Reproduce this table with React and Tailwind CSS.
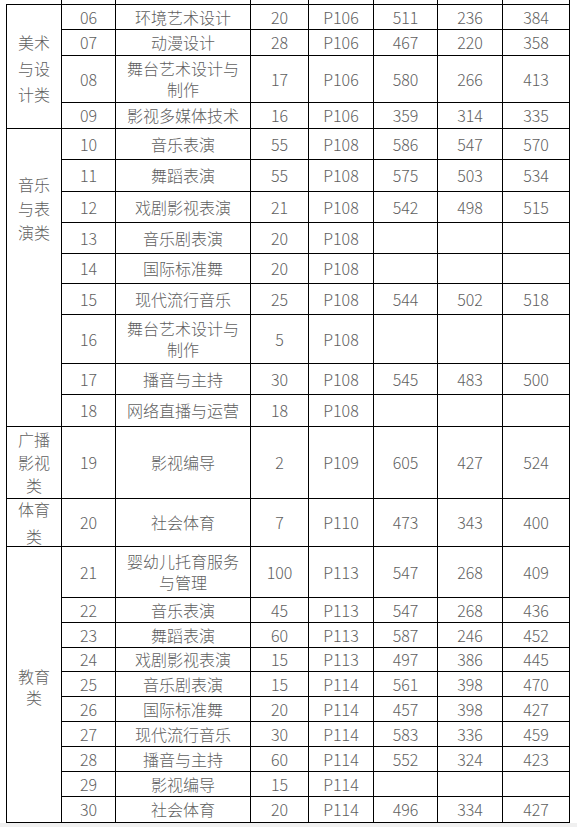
const ROWS = [
  ["06", "环境艺术设计", "20", "P106", "511", "236", "384", 25],
  ["07", "动漫设计", "28", "P106", "467", "220", "358", 26],
  ["08", ["舞台艺术设计与", "制作"], "17", "P106", "580", "266", "413", 47],
  ["09", "影视多媒体技术", "16", "P106", "359", "314", "335", 26],
  ["10", "音乐表演", "55", "P108", "586", "547", "570", 31],
  ["11", "舞蹈表演", "55", "P108", "575", "503", "534", 32],
  ["12", "戏剧影视表演", "21", "P108", "542", "498", "515", 31],
  ["13", "音乐剧表演", "20", "P108", "", "", "", 31],
  ["14", "国际标准舞", "20", "P108", "", "", "", 30],
  ["15", "现代流行音乐", "25", "P108", "544", "502", "518", 31],
  ["16", ["舞台艺术设计与", "制作"], "5", "P108", "", "", "", 49],
  ["17", "播音与主持", "30", "P108", "545", "483", "500", 31],
  ["18", "网络直播与运营", "18", "P108", "", "", "", 32],
  ["19", "影视编导", "2", "P109", "605", "427", "524", 72],
  ["20", "社会体育", "7", "P110", "473", "343", "400", 48],
  ["21", ["婴幼儿托育服务", "与管理"], "100", "P113", "547", "268", "409", 51],
  ["22", "音乐表演", "45", "P113", "547", "268", "436", 25],
  ["23", "舞蹈表演", "60", "P113", "587", "246", "452", 25],
  ["24", "戏剧影视表演", "15", "P113", "497", "386", "445", 24],
  ["25", "音乐剧表演", "15", "P114", "561", "398", "470", 25],
  ["26", "国际标准舞", "20", "P114", "457", "398", "427", 25],
  ["27", "现代流行音乐", "30", "P114", "583", "336", "459", 25],
  ["28", "播音与主持", "60", "P114", "552", "324", "423", 25],
  ["29", "影视编导", "15", "P114", "", "", "", 25],
  ["30", "社会体育", "20", "P114", "496", "334", "427", 26],
];

// category cell starts on the row with this code
const GROUPS = {
  "06": { lines: ["美术", "与设", "计类"], span: 4, cls: "align-middle leading-[26px] pt-[4px]" },
  "10": { lines: ["音乐", "与表", "演类"], span: 9, cls: "align-top leading-[24px] pt-[43px]" },
  "19": { lines: ["广播", "影视", "类"], span: 1, cls: "align-middle leading-[23px]" },
  "20": { lines: ["体育", "类"], span: 1, cls: "align-middle leading-[20px] [&>div+div]:mt-[7px]" },
  "21": { lines: ["教育", "类"], span: 10, cls: "align-middle leading-[21px] pt-[6px]" },
};

const cell = "border border-black p-0 text-center align-middle";

function Lines({ value }) {
  if (!Array.isArray(value)) return value;
  return value.map((l, i) => (
    <div key={i} className="leading-[21px]">{l}</div>
  ));
}

export default function App() {
  return (
    <div
      className="w-[577px] h-[827px] bg-white overflow-hidden relative text-[#606060] text-[16px] font-light"
      style={{ fontFamily: '"Noto Sans CJK SC", "Noto Sans", sans-serif' }}
    >
      <div className="pl-[6px]">
        <table className="table-fixed border-collapse w-[563px]">
          <colgroup>
            <col className="w-[55px]" />
            <col className="w-[54px]" />
            <col className="w-[135px]" />
            <col className="w-[58px]" />
            <col className="w-[65px]" />
            <col className="w-[64px]" />
            <col className="w-[65px]" />
            <col className="w-[67px]" />
          </colgroup>
          <tbody>
            <tr className="h-[4px]">
              <td className="border-r border-b border-black p-0 leading-[0]" />
              {Array.from({ length: 7 }).map((_, i) => (
                <td key={i} className="border-x border-b border-black p-0 leading-[0]" />
              ))}
            </tr>
            {ROWS.map((r) => {
              const g = GROUPS[r[0]];
              return (
                <tr key={r[0]} style={{ height: r[7] }}>
                  {g && (
                    <td rowSpan={g.span} className={`border border-black p-0 text-center ${g.cls}`}>
                      {g.lines.map((l) => (
                        <div key={l}>{l}</div>
                      ))}
                    </td>
                  )}
                  {r.slice(0, 7).map((v, i) => (
                    <td key={i} className={`${cell} leading-[20px]`}>
                      <Lines value={v} />
                    </td>
                  ))}
                </tr>
              );
            })}
          </tbody>
        </table>
      </div>
      <div className="absolute left-0 right-0 bottom-0 h-[4px] bg-[#f0f0f0]" />
    </div>
  );
}
